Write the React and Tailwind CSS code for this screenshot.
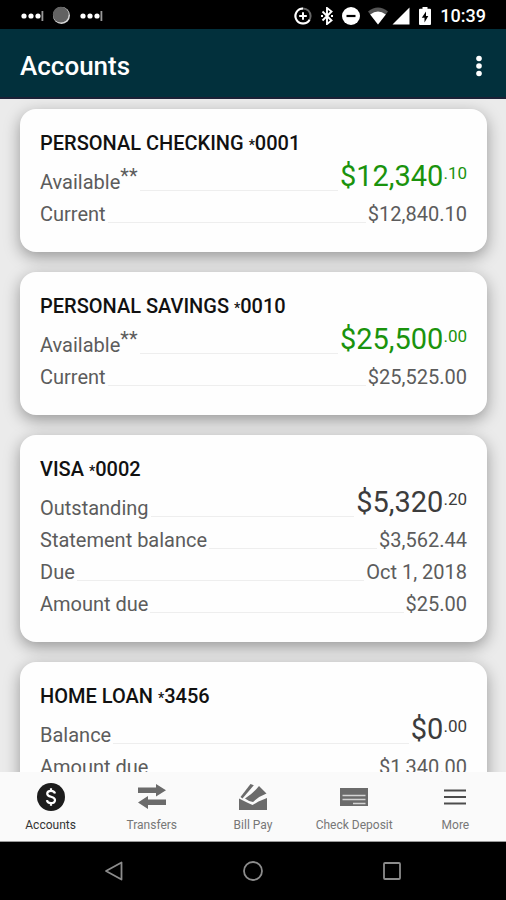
// App.jsx
const accounts = [
  {
    name: 'PERSONAL CHECKING',
    number: '0001',
    positive: true,
    main: { label: 'Available', note: '**', whole: '$12,340', cents: '.10' },
    rows: [{ label: 'Current', value: '$12,840.10' }],
  },
  {
    name: 'PERSONAL SAVINGS',
    number: '0010',
    positive: true,
    main: { label: 'Available', note: '**', whole: '$25,500', cents: '.00' },
    rows: [{ label: 'Current', value: '$25,525.00' }],
  },
  {
    name: 'VISA',
    number: '0002',
    main: { label: 'Outstanding', whole: '$5,320', cents: '.20' },
    rows: [
      { label: 'Statement balance', value: '$3,562.44' },
      { label: 'Due', value: 'Oct 1, 2018' },
      { label: 'Amount due', value: '$25.00' },
    ],
  },
  {
    name: 'HOME LOAN',
    number: '3456',
    main: { label: 'Balance', whole: '$0', cents: '.00' },
    rows: [{ label: 'Amount due', value: '$1,340.00' }],
  },
];

const CarrierDots = () => (
  <svg width="24" height="12" viewBox="0 0 24 12" fill="#fff">
    <circle cx="4" cy="6" r="2.6" />
    <circle cx="11" cy="6" r="2.6" />
    <circle cx="18" cy="6" r="2.6" />
    <rect x="21.500" y="1" width="1.800" height="10" fill="#999" />
  </svg>
);

const StatusBar = () => (
  <div className="flex h-[29px] shrink-0 items-center justify-between bg-black px-5 pt-0.5 text-white">
    <div className="flex items-center gap-2">
      <CarrierDots />
      <svg width="19" height="19" viewBox="0 0 19 19">
        <circle cx="9.5" cy="9.5" r="8.5" fill="#d8d8d8" />
        <circle cx="8.8" cy="8.6" r="7.9" fill="#626262" />
      </svg>
      <CarrierDots />
    </div>
    <div className="flex items-center">
      <svg className="mr-2" width="18" height="18" viewBox="0 0 18 18" fill="none" stroke="#fff">
        <circle cx="9" cy="9" r="7.6" stroke="#666" strokeWidth="2" />
        <path d="M9 1.4A7.6 7.6 0 1 0 15.6 12.8" strokeWidth="2" />
        <path d="M9 5.2v7.6M5.2 9h7.6" strokeWidth="2" />
      </svg>
      <svg className="mr-2" width="14" height="18" viewBox="0 0 14 18" fill="none" stroke="#fff" strokeWidth="1.9">
        <path d="M2.5 4.5l9 9L7 17V1l4.500 3.500-9 9" />
        <path d="M1 9h2M11 9h2" strokeWidth="2" />
      </svg>
      <svg className="mr-2" width="18" height="18" viewBox="0 0 18 18">
        <circle cx="9" cy="9" r="9" fill="#fff" />
        <rect x="4.500" y="7.900" width="9" height="2.200" fill="#000" />
      </svg>
      <svg className="mr-1" width="20" height="18" viewBox="0 0 20 18">
        <path d="M10 17.500L0 4.500Q10-3.500 20 4.500z" fill="#555" />
        <path d="M10 17.500L2.200 7.400Q10 1.500 17.800 7.400z" fill="#fff" />
      </svg>
      <svg className="mr-2" width="18" height="18" viewBox="0 0 18 18" fill="#fff">
        <path d="M17.500.500v17H.500z" />
      </svg>
      <svg className="mr-2" width="14" height="20" viewBox="0 0 14 20">
        <path d="M4.500 1h5v1.800H12a1 1 0 0 1 1 1V18a1 1 0 0 1-1 1H2a1 1 0 0 1-1-1V3.800a1 1 0 0 1 1-1h2.500z" fill="#fff" />
        <path d="M8 5.500L3.800 11.800H6.500V16.500L10.300 10H8z" fill="#000" />
      </svg>
      <span className="text-[18px] leading-5 font-medium">10:39</span>
    </div>
  </div>
);

const Header = () => (
  <header className="flex h-[70px] shrink-0 items-center justify-between border-b-2 border-[#1c2136] bg-[#02303c] pt-1.5 pr-[15px] pl-5 text-white">
    <h1 className="text-[26px] leading-8 font-medium">Accounts</h1>
    <button type="button" aria-label="More options" className="flex w-6 justify-center">
      <svg width="6" height="22" viewBox="0 0 6 22" fill="#fff">
        <circle cx="3" cy="3.500" r="2.800" />
        <circle cx="3" cy="11" r="2.800" />
        <circle cx="3" cy="18.500" r="2.800" />
      </svg>
    </button>
  </header>
);

const Leader = () => <span className="mb-[7px] h-px flex-1 bg-[#eee]" />;

const AccountCard = ({ account }) => {
  const { name, number, positive, main, rows } = account;

  return (
    <section className="rounded-2xl bg-[#fefefe] px-5 pt-5 pb-[22px] shadow-[0_5px_16px_rgba(0,0,0,0.36)]">
      <h2 className="text-[20px] leading-7 font-medium text-[#111]">
        {name} <span className="inline-block align-middle text-[14px] leading-3">*</span>
        {number}
      </h2>
      <dl className="text-[20px] leading-8 text-[#5c5c5c]">
        <div className="flex h-[41px] items-end gap-0.5">
          <dt className="flex">
            {main.label}
            {main.note && <span className="-mt-1.5 leading-8">{main.note}</span>}
          </dt>
          <Leader />
          <dd className={`flex h-full items-start ${positive ? 'text-[#1a930d]' : 'text-[#3c3c3c]'}`}>
            <span className="text-[29px] leading-[38px]">{main.whole}</span>
            <span className="text-[17px] leading-8">{main.cents}</span>
          </dd>
        </div>
        {rows.map((row) => (
          <div key={row.label} className="flex h-8 items-end gap-0.5">
            <dt>{row.label}</dt>
            <Leader />
            <dd>{row.value}</dd>
          </div>
        ))}
      </dl>
    </section>
  );
};

const tabs = [
  {
    label: 'Accounts',
    active: true,
    icon: (
      <>
        <circle cx="15" cy="15" r="14" fill="#1c1c1c" />
        <path
          d="M19 11.500C18.600 9.700 17.200 8.800 15 8.800S11.200 9.900 11.200 11.700C11.200 15.800 19 13.800 19 18.100C19 20 17.400 21.200 15 21.200S11.200 20.200 10.900 18.200M15 6.200V9M15 21V23.800"
          fill="none"
          stroke="#fff"
          strokeWidth="2.200"
        />
      </>
    ),
  },
  {
    label: 'Transfers',
    icon: (
      <path d="M1 5.500h18V2l10 6.300-10 6.200V11H1zM29 17.500H11V14L1 20.500 11 27v-4h18z" fill="#6b6b6b" />
    ),
  },
  {
    label: 'Bill Pay',
    icon: (
      <>
        <path d="M1 16.500l8 4 5.500 2.500 6-3.500L29 16V28H1z" fill="#6b6b6b" />
        <path d="M12.500 2l3.300 1.200L4.500 16.500 2.500 15z" fill="#6b6b6b" />
        <path d="M21 4l7.500 7.500q-7 2.500-13.500 8.500-5-1-8-3.500 8-5 14-12.500z" fill="#6b6b6b" />
      </>
    ),
  },
  {
    label: 'Check Deposit',
    icon: (
      <>
        <rect x="1" y="6" width="28" height="18" fill="#6b6b6b" />
        <path d="M3.500 13.500h23M3.500 17.500h23M14 21.500h12.500" stroke="#d4d4d4" strokeWidth="1.600" />
      </>
    ),
  },
  {
    label: 'More',
    icon: <path d="M4 8.500h22M4 15h22M4 21.500h22" stroke="#4c4c4c" strokeWidth="2" />,
  },
];

const TabBar = () => (
  <nav className="grid h-[70px] shrink-0 grid-cols-5 border-b border-[#9a9a9a] bg-[#fafafa]">
    {tabs.map((tab) => (
      <button
        key={tab.label}
        type="button"
        className={`flex flex-col items-center gap-[3px] pt-[10px] text-[12px] leading-5 whitespace-nowrap ${
          tab.active ? 'text-[#333]' : 'text-[#777]'
        }`}
      >
        <svg width="30" height="30" viewBox="0 0 30 30">
          {tab.icon}
        </svg>
        {tab.label}
      </button>
    ))}
  </nav>
);

const SystemNav = () => (
  <div className="flex h-[58px] shrink-0 items-center justify-around bg-black px-11">
    <button type="button" aria-label="Back">
      <svg width="20" height="20" viewBox="0 0 20 20" fill="none" stroke="#8c8c8c" strokeWidth="1.800">
        <path d="M17.500 1.500v17L2 10z" strokeLinejoin="round" />
      </svg>
    </button>
    <button type="button" aria-label="Home">
      <svg width="20" height="20" viewBox="0 0 20 20" fill="none" stroke="#8c8c8c" strokeWidth="1.800">
        <circle cx="10" cy="10" r="9" />
      </svg>
    </button>
    <button type="button" aria-label="Recent apps">
      <svg width="20" height="20" viewBox="0 0 20 20" fill="none" stroke="#8c8c8c" strokeWidth="1.800">
        <rect x="2" y="2" width="16" height="16" rx="1" />
      </svg>
    </button>
  </div>
);

const App = () => {
  return (
    <div className="flex h-screen flex-col font-[Roboto,sans-serif]">
      <StatusBar />
      <Header />
      <main className="flex min-h-0 flex-1 flex-col gap-5 overflow-y-auto bg-[#ebebeb] pt-[10px] pr-[19px] pb-5 pl-5 [scrollbar-width:none]">
        {accounts.map((account) => (
          <AccountCard key={account.number} account={account} />
        ))}
      </main>
      <TabBar />
      <SystemNav />
    </div>
  );
};

export default App;
